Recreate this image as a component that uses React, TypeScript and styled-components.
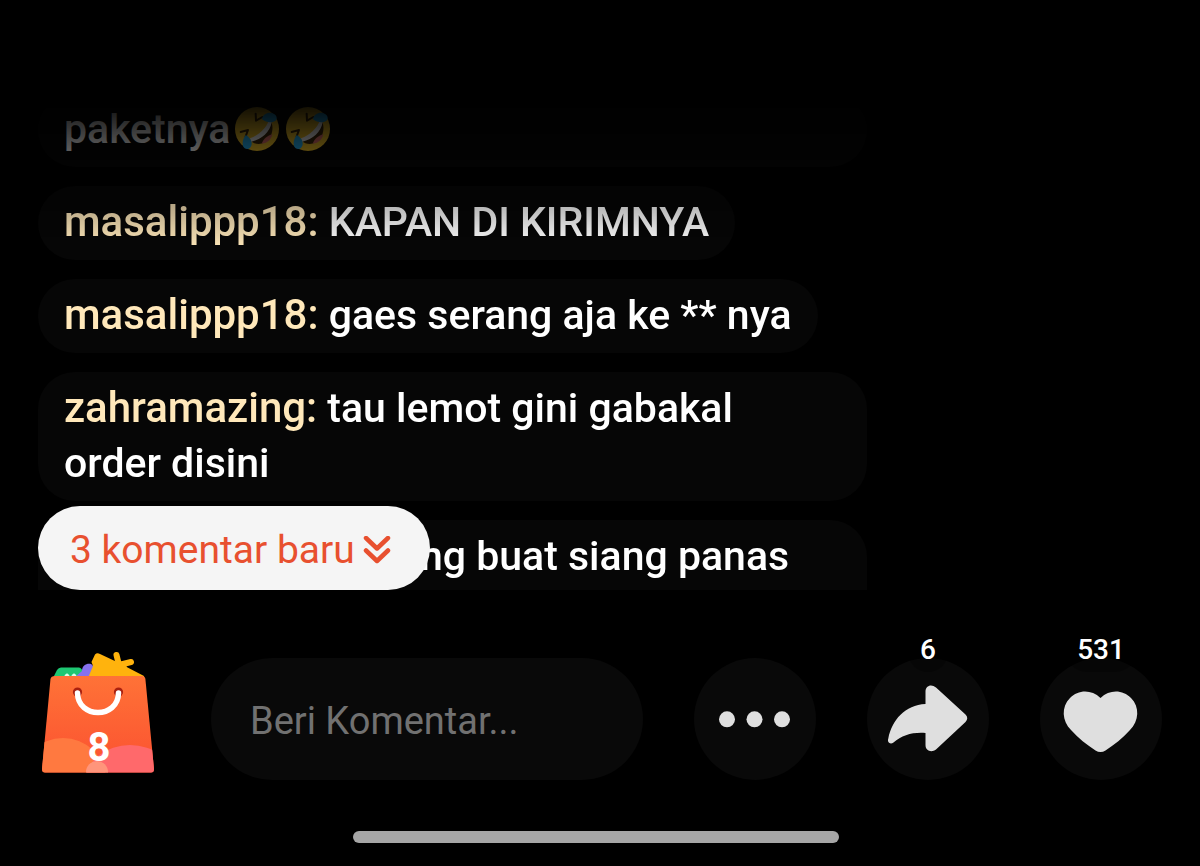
import React from "react";
import styled, { createGlobalStyle } from "styled-components";

const GlobalStyle = createGlobalStyle`
  *, *::before, *::after { box-sizing: border-box; }
  body { margin: 0; background: #000; }
  button, input { font: inherit; color: inherit; border: 0; margin: 0; padding: 0; }
  button { cursor: pointer; }
`;

const Page = styled.main`
  display: flex;
  flex-direction: column;
  height: 100vh;
  padding: 95px 38px 23px;
  background: #000;
  color: #fff;
  font-family: Roboto, "Noto Sans", sans-serif;
`;

const Feed = styled.section`
  position: relative;
  flex: 1;
  display: flex;
  flex-direction: column;
  min-height: 0;
`;

const CommentList = styled.ul`
  flex: 1;
  display: flex;
  flex-direction: column;
  justify-content: flex-end;
  align-items: flex-start;
  gap: 19px;
  min-height: 0;
  margin: 0;
  padding: 0;
  list-style: none;
  overflow: hidden;
  mask-image: linear-gradient(to bottom, transparent, #000 155px);
`;

const Comment = styled.li<{ $wide?: boolean; $cut?: boolean }>`
  flex: none;
  width: ${(p) => (p.$wide ? "100%" : "auto")};
  max-width: 829px;
  height: ${(p) => (p.$cut ? "70px" : "auto")};
  padding: 9px ${(p) => (p.$wide ? "72px" : "26px")} 10px 26px;
  border-radius: ${(p) => (p.$cut ? "37px 37px 0 0" : "37px")};
  background: #060606;
  font-size: 41px;
  font-weight: 500;
  line-height: 55px;
`;

const Author = styled.span`
  color: #ffe8ba;
  font-size: 42px;
  line-height: 42px;
`;

const Emoji = styled.svg`
  width: 44px;
  height: 44px;
  margin: 0 2px 0 5px;
  vertical-align: -8px;
`;

const NewComments = styled.button`
  position: absolute;
  left: 0;
  bottom: 0;
  display: flex;
  align-items: center;
  gap: 8px;
  height: 84px;
  padding: 4px 39px 0 32px;
  border-radius: 42px;
  background: #f5f5f5;
  color: #e8502f;
  font-size: 39px;
  line-height: 48px;

  svg { width: 28px; height: 28px; }
`;

const Toolbar = styled.footer`
  display: flex;
  align-items: center;
  gap: 51px;
  padding: 68px 0 51px;
`;

const CommentInput = styled.input`
  flex: 1;
  min-width: 0;
  height: 122px;
  padding: 4px 39px 0;
  border-radius: 61px;
  background: #090909;
  font-size: 38px;
  outline: none;

  &::placeholder { color: #717171; opacity: 1; }
`;

const RoundButton = styled.button<{ $plain?: boolean }>`
  position: relative;
  flex: none;
  width: 122px;
  height: 122px;
  border-radius: 61px;
  background: ${(p) => (p.$plain ? "transparent" : "#090909")};

  svg { display: block; width: 122px; height: 122px; overflow: visible; }
`;

const Count = styled.span`
  position: absolute;
  left: 50%;
  top: -30px;
  padding: 0 12px;
  transform: translateX(-50%);
  border-radius: 22px;
  background: rgba(0, 0, 0, 0.3);
  font-size: 28px;
  font-weight: 500;
  line-height: 44px;
`;

const BagCount = styled.span`
  position: absolute;
  left: 0;
  right: 0;
  bottom: 8px;
  font-size: 40px;
  font-weight: 700;
  line-height: 48px;
  text-align: center;
`;

const SystemBar = styled.div`
  display: flex;
  justify-content: center;
  padding-right: 8px;
`;

const HomeIndicator = styled.div`
  width: 486px;
  max-width: 100%;
  height: 12px;
  border-radius: 6px;
  background: #a6a6a6;
`;

function Laughing() {
  return (
    <Emoji viewBox="48 42 132 132" role="img" aria-label="🤣">
      <circle cx="114" cy="108" r="66" fill="#fccb2a" />
      <path d="M156 86C150 116 126 138 96 143C108 158 138 156 152 136C162 118 163 98 156 86Z" fill="#422b0d" />
      <path d="M128 152C133 138 146 127 160 124C156 141 146 150 128 152Z" fill="#ed7770" />
      <path d="M150 82C142 105 120 127 93 136L97 146C129 140 153 116 158 88Z" fill="#fff" />
      <path d="M110 62L111 83L130 72M65 117L87 111L80 130" fill="none" stroke="#422b0d" strokeWidth="6" strokeLinecap="round" strokeLinejoin="round" />
      <path d="M129 79C131 64 145 57 159 60C173 64 178 78 168 84C156 92 140 87 129 79Z" fill="#29b6f6" />
      <path d="M80 126C95 134 103 150 95 162C88 172 76 169 72 159C69 149 72 136 80 126Z" fill="#29b6f6" />
    </Emoji>
  );
}

function ShoppingBag() {
  return (
    <svg viewBox="18 18 122 122" aria-hidden="true">
      <defs>
        <linearGradient id="bag" x1="0" y1="0" x2="0" y2="1">
          <stop offset="0" stopColor="#ff7337" />
          <stop offset="1" stopColor="#fb5030" />
        </linearGradient>
        <clipPath id="bagShape">
          <path d="M35 36H122Q125 36 125.400 39L134 129Q134 132.500 131 132.500H25Q22 132.500 22 129L30.500 39Q31 36 35 36Z" />
        </clipPath>
      </defs>
      <path d="M33 38L37 30Q38.500 27.500 41 27.500H59Q62 28 63 32L63 38Z" fill="#1ec773" />
      <path d="M45 36L47 34.500L49 36M52 36L54 34.500L56 36" fill="none" stroke="#d6ffe9" strokeWidth="2" />
      <path d="M54 38L62 31C62 25 67 23 71 24Q75 26 72 31L69 38Z" fill="#8671ee" />
      <path d="M68 38L73 26L71.500 22L75 14.500Q77 12.500 80 14L97 22L124 36V38Z" fill="#ffb30d" />
      <path d="M96.500 15L99 25L111 22M99 25L104 28" fill="none" stroke="#ffb30d" strokeWidth="6" strokeLinecap="round" strokeLinejoin="round" />
      <g clipPath="url(#bagShape)">
        <rect x="20" y="34" width="116" height="100" fill="url(#bag)" />
        <ellipse cx="43" cy="140" rx="43" ry="42" fill="#ff7940" />
        <ellipse cx="110" cy="140" rx="44" ry="35" fill="#ff696b" />
        <circle cx="77" cy="132" r="11" fill="#ff957b" />
      </g>
      <circle cx="57.500" cy="52" r="4.600" fill="#a9200f" />
      <circle cx="98.500" cy="52" r="4.600" fill="#a9200f" />
      <path d="M57.500 53C58 79 98 79 98.500 53" fill="none" stroke="#fff" strokeWidth="5.500" strokeLinecap="round" />
    </svg>
  );
}

export default function App() {
  return (
    <>
      <GlobalStyle />
      <Page>
        <Feed aria-label="Komentar">
          <CommentList>
            <Comment $wide>
              paketnya
              <Laughing />
              <Laughing />
            </Comment>
            <Comment>
              <Author>masalippp18:</Author> KAPAN DI KIRIMNYA
            </Comment>
            <Comment>
              <Author>masalippp18:</Author> gaes serang aja ke ** nya
            </Comment>
            <Comment $wide>
              <Author>zahramazing:</Author> tau lemot gini gabakal order disini
            </Comment>
            <Comment $wide $cut>
              <Author>masalippp18:</Author> gudang buat siang panas
            </Comment>
          </CommentList>
          <NewComments type="button">
            3 komentar baru
            <svg viewBox="0 0 28 28" fill="none" stroke="currentColor" strokeWidth="4.500" strokeLinecap="round" strokeLinejoin="round" aria-hidden="true">
              <path d="M3 2L14 12.500L25 2M3 14.500L14 25L25 14.500" />
            </svg>
          </NewComments>
        </Feed>
        <Toolbar>
          <RoundButton $plain type="button" aria-label="Keranjang">
            <ShoppingBag />
            <BagCount>8</BagCount>
          </RoundButton>
          <CommentInput type="text" aria-label="Beri Komentar" placeholder="Beri Komentar..." />
          <RoundButton type="button" aria-label="Lainnya">
            <svg viewBox="14 28 122 122" fill="#dfdfdf" aria-hidden="true">
              <circle cx="47" cy="89.300" r="8" />
              <circle cx="74.500" cy="89.300" r="8" />
              <circle cx="102" cy="89.300" r="8" />
            </svg>
          </RoundButton>
          <RoundButton type="button" aria-label="Bagikan">
            <svg viewBox="187 28 122 122" fill="#dfdfdf" aria-hidden="true">
              <path d="M245.500 74V61.500C245.500 55.500 251.500 53.500 256 57.500L285.500 84.500Q289 88 285.500 92L256 119.500C251.500 123 245.500 121 245.500 115V103C233 102 222 105 213.500 112.500C210 115 207 112 208.300 108.500C212 90 225 75 245.500 74Z" />
            </svg>
            <Count>6</Count>
          </RoundButton>
          <RoundButton type="button" aria-label="Suka">
            <svg viewBox="360 28 122 122" fill="#dfdfdf" aria-hidden="true">
              <path d="M420.500 68C430 59 443 60 451 68C460 77 459 91 450 100C443 108 434 115 425.500 120.500Q420.500 123.500 415.500 120.500C407 115 398 108 391 100C382 91 381 77 390 68C398 60 411 59 420.500 68Z" />
            </svg>
            <Count>531</Count>
          </RoundButton>
        </Toolbar>
        <SystemBar>
          <HomeIndicator />
        </SystemBar>
      </Page>
    </>
  );
}
